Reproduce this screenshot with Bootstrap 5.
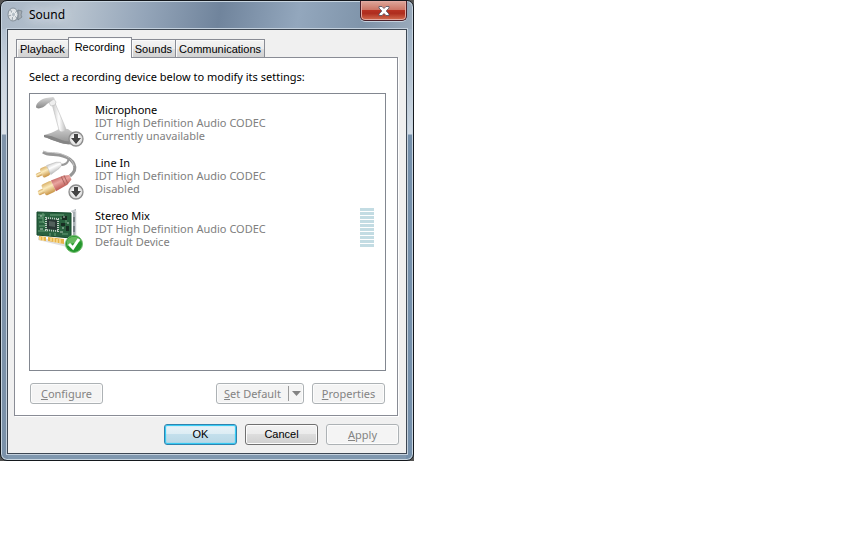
<!DOCTYPE html>
<html lang="en">
<head>
<meta charset="utf-8">
<meta name="viewport" content="width=device-width, initial-scale=1">
<title>Sound</title>
<link rel="stylesheet" href="https://cdn.jsdelivr.net/npm/bootstrap@5.3.0/dist/css/bootstrap.min.css">
<style>
body { font-family: "Noto Sans", "Open Sans", sans-serif; font-size: 11px; line-height: 13px; color: #000; background: #fff; }
.desk { max-width: 414px; background: #555554; }
.win { border: 1px solid #14181d; border-radius: 7px; padding: 0 5px 5px;
  box-shadow: inset 0 0 0 1px #c8d5e0;
  background:
    linear-gradient(#b2c0cf, #ccd5df 50px, #dce2e9 105px, #8094aa 106px, #7a91a9 100%) 0 28px / 7px 100% no-repeat,
    linear-gradient(#9db0c3, #b4c3d2 50px, #d2dce6 105px, #7590ab 106px, #7590ab 100%) 100% 28px / 7px 100% no-repeat,
    linear-gradient(100deg, #a9b7c6 0, #b7c3cf 18%, #94a5b9 35%, #70849c 53%, #93a7bd 72%, #7f94aa 88%, #9aaabb 100%) 0 0 / 100% 28px no-repeat,
    #8098af; }
.title-bar { height: 27px; padding: 0 1px; }
.title-icon { margin-top: 6px; }
.title-text { font-size: 12px; line-height: 18px; padding: 5px 0 0 6px; font-weight: 400; text-shadow: 0 0 8px #e4eaf0, 0 0 12px #e4eaf0; }
.close-btn { width: 47px; height: 20px; padding: 0; border: 1px solid #4b2029; border-top: 0; border-radius: 0 0 5px 5px; box-shadow: inset 0 0 0 1px #e3aaa2, 0 1px 0 #c5d0dc; background: linear-gradient(#dda79b, #cd7767 45%, #b73222 50%, #ae2d1e 65%, #d36d50); display: flex; align-items: center; justify-content: center; }
.client { border: 1px solid #3d4753; outline: 1px solid #c3d0dd; margin: 1px; background: #f0f0f0; padding: 7px 7px 8px 6px; }
.nav-tabs.tab-strip { border: 0; padding-left: 2px; height: 21px; align-items: flex-end; flex-wrap: nowrap; position: relative; z-index: 1; }
.tab-strip .nav-link { border: 1px solid #898c95; border-left-width: 0; border-bottom: 0; border-radius: 0; padding: 0 3px 1px; height: 18px; line-height: 18px; color: #000; white-space: nowrap; background: linear-gradient(#f3f3f3, #ececec 50%, #dedede 51%, #d2d2d2); margin: 0 0 1px; box-shadow: inset 1px 1px 0 #fafafa; }
.tab-strip .nav-item:first-child .nav-link { border-left-width: 1px; }
.tab-strip .nav-link.active { height: 21px; margin: 0 0 0 -1px; border: 1px solid #898c95; border-bottom: 0; background: #fff; color: #000; padding: 0 6px 2px; line-height: 18px; }
.tight { font-family: "Liberation Sans", Arial, sans-serif; }
.page-pane { background: #fff; border: 1px solid #898c95; margin: -1px 1px 0 0; padding: 12px 11px 11px 14px; box-shadow: 1px 1px 0 #fff; }
.hint { margin: 0 0 10px; }
.device-box { border: 1px solid #828790; height: 278px; padding: 3px 11px 0 5px; margin-bottom: 12px; overflow: auto; }
.device-box .list-group-item { border: 0; padding: 0; height: 53px; background: transparent; color: #808080; }
.device-icon { width: 50px; height: 50px; flex: none; }
.device-name { color: #000; }
.device-text { padding: 6px 0 0 10px; }
.meter { width: 14px; margin-top: 5px; gap: 1px; }
.meter i { height: 3px; background: #c3dce3; }
.pane-buttons { padding: 0 1px; }
.push { width: 73px; height: 21px; padding: 0; border: 1px solid #707070; border-radius: 3px; font-size: 11px; line-height: 19px; color: #000; box-shadow: inset 0 0 0 1px #fcfcfc; background: linear-gradient(#f2f2f2, #ebebeb 49%, #dddddd 50%, #cfcfcf); }
.push:hover { border-color: #3c7fb1; color: #000; }
.push:disabled { opacity: 1; color: #838383; border-color: #adb2b5; background: #f4f4f4; }
.push-main { border-color: #3083ae; box-shadow: inset 0 0 1px 1px #27c8f4; background: linear-gradient(#eaf3f8, #dcecf4 49%, #c3dfec 50%, #b9d7e5); }
.push-wide { width: 88px; }
.arrow-part { width: 15px; height: 15px; border-left: 1px solid #9a9a9a; display: flex; align-items: center; justify-content: center; }
</style>
<script defer src="https://cdn.jsdelivr.net/npm/bootstrap@5.3.0/dist/js/bootstrap.bundle.min.js"></script>
</head>
<body>
<main class="desk">
<section class="win" aria-labelledby="win-title">
  <header class="title-bar d-flex align-items-start">
    <svg class="flex-shrink-0 title-icon" width="16" height="16" viewBox="0 0 16 16" aria-hidden="true">
      <path d="M8 3l5 1 1 3-1 4-5 3z" fill="#8b949c"/><path d="M11 3l4 1-1 4 1 2-4 3z" fill="#a5adb4" stroke="#697580" stroke-width=".6"/>
      <ellipse cx="6" cy="7.500" rx="5" ry="6.500" fill="#dfe3e6" stroke="#84909a"/>
      <path d="M6 7.500L3 2M6 7.500L1.500 9M6 7.500L5 14M6 7.500L10 4M6 7.500L10 11" stroke="#98a3ab"/>
      <ellipse cx="6.500" cy="7.500" rx="2" ry="2.500" fill="#b3bdc4" stroke="#fff" stroke-width=".7"/>
    </svg>
    <h1 class="title-text m-0 me-auto" id="win-title">Sound</h1>
    <button type="button" class="close-btn" aria-label="Close">
      <svg width="12" height="10" viewBox="0 0 12 10" aria-hidden="true"><path d="M1 .5h3l2 2 2-2h3v1.500L8.200 5 11 8v1.500H8l-2-2-2 2H1V8l2.800-3L1 2z" fill="#fff" stroke="#4e4f60" stroke-width=".8"/></svg>
    </button>
  </header>
  <div class="client">
    <ul class="nav nav-tabs tab-strip tight" role="tablist">
      <li class="nav-item" role="presentation"><button class="nav-link" type="button" role="tab">Playback</button></li>
      <li class="nav-item" role="presentation"><button class="nav-link active" type="button" role="tab" aria-selected="true">Recording</button></li>
      <li class="nav-item" role="presentation"><button class="nav-link" type="button" role="tab">Sounds</button></li>
      <li class="nav-item" role="presentation"><button class="nav-link" type="button" role="tab">Communications</button></li>
    </ul>
    <div class="page-pane">
      <p class="hint">Select a recording device below to modify its settings:</p>
      <div class="device-box">
        <ul class="list-group list-group-flush">
          <li class="list-group-item d-flex">
            <svg class="device-icon" viewBox="0 0 50 50" aria-hidden="true">
              <defs>
                <linearGradient id="silver"><stop stop-color="#c4c4c4"/><stop offset=".5" stop-color="#fff"/><stop offset="1" stop-color="#bdbdbd"/></linearGradient>
                <linearGradient id="stand" x2="0" y2="1"><stop stop-color="#c8c8c8"/><stop offset="1" stop-color="#8e8e8e"/></linearGradient>
                <linearGradient id="head" x2="0" y2="1"><stop stop-color="#d8d8d8"/><stop offset="1" stop-color="#888"/></linearGradient>
                <radialGradient id="disc"><stop offset=".4" stop-color="#fff"/><stop offset="1" stop-color="#cfcfcf"/></radialGradient>
              </defs>
              <path d="M9 38c5-1 10-3 15-6l9 0c3 3 8 5 13 6v8c-9 1-14 2-20 0-7-2-13-5-17-6z" fill="url(#stand)"/>
              <path d="M9 38c7 0 14 4 21 6 5 1 10 0 15-1v4c-8 0-12 1-19-1-7-2-13-5-17-6z" fill="#858585"/>
              <path d="M17 7l3-1 11 26c0 3-6 4-7 1z" fill="url(#silver)" stroke="#bdbdbd" stroke-width=".6"/>
              <path d="M15 3l4-1 2 3-1 3-4 1-2-3z" fill="#eee" stroke="#bbb" stroke-width=".6"/>
              <path d="M1 10c0-4 5-8 10-9l7-1c2 1 2 2 0 3l-6 4c-3 4-10 6-11 3z" fill="url(#head)"/>
              <circle cx="41" cy="42" r="7" fill="url(#disc)" stroke="#8d8d8d" stroke-width="1.300"/><path d="M39 37h4v4h3l-5 6-5-6h3z" fill="#444"/>
            </svg>
            <div class="device-text"><div class="device-name">Microphone</div><div>IDT High Definition Audio CODEC</div><div>Currently unavailable</div></div>
          </li>
          <li class="list-group-item d-flex">
            <svg class="device-icon" viewBox="0 0 50 50" aria-hidden="true">
              <defs>
                <linearGradient id="gold" x2="0" y2="1"><stop stop-color="#d9b16a"/><stop offset=".4" stop-color="#fbebbd"/><stop offset="1" stop-color="#c89345"/></linearGradient>
                <linearGradient id="red" x2="0" y2="1"><stop stop-color="#c96d69"/><stop offset=".4" stop-color="#e9a5a0"/><stop offset="1" stop-color="#bd5752"/></linearGradient>
                <linearGradient id="white" x2="0" y2="1"><stop stop-color="#d0d0d0"/><stop offset=".4" stop-color="#fff"/><stop offset="1" stop-color="#b9b9b9"/></linearGradient>
              </defs>
              <path d="M8 2c5 4 13 1 20 4 10 3 17 12 7 20" fill="none" stroke="#969696" stroke-width="3"/>
              <path d="M8 1c6 3 13 0 21 4 5 2 9 6 10 11" fill="none" stroke="#c3c3c3"/>
              <path d="M25 15c7 0 8-3 9-7" fill="none" stroke="#999" stroke-width="2"/>
              <g transform="translate(1 26) rotate(-25)">
                <rect y="-2" width="8" height="4" rx="2" fill="url(#gold)"/><rect x="6" y="-5" width="8" height="10" rx="2" fill="url(#gold)"/><path d="M14-5l10 1 4 2v3l-4 2-10 2z" fill="url(#white)" stroke="#b4b4b4" stroke-width=".5"/>
              </g>
              <g transform="translate(3 43) rotate(-25)">
                <rect y="-2" width="9" height="5" rx="2" fill="url(#gold)"/><rect x="6" y="-6" width="11" height="12" rx="2" fill="url(#gold)"/><path d="M17-6l13 1 6 2v5l-6 3-13 1z" fill="url(#red)"/><path d="M28-5v9M31-5v9" stroke="#aa6662"/>
              </g>
              <circle cx="41" cy="42" r="7" fill="url(#disc)" stroke="#8d8d8d" stroke-width="1.300"/><path d="M39 37h4v4h3l-5 6-5-6h3z" fill="#444"/>
            </svg>
            <div class="device-text"><div class="device-name">Line In</div><div>IDT High Definition Audio CODEC</div><div>Disabled</div></div>
          </li>
          <li class="list-group-item d-flex">
            <svg class="device-icon" viewBox="0 0 50 50" aria-hidden="true">
              <path d="M3 34l29 6v4L3 37z" fill="#e0e0e0"/>
              <path d="M36 8l5-2v35l-3 1V10z" fill="#a6adb2"/><path d="M36 8h5v32" fill="none" stroke="#e5e8ea"/><path d="M38 14h2v5h-2zM38 23h2v6h-2z" fill="#747e83"/>
              <path d="M2 9l34 1v25L2 32z" fill="#29613f" stroke="#174a2d"/>
              <path d="M3 12h7M3 15h5M15 12h14M4 19h5M4 23h6M3 28h10M25 15l6 1v4M27 31h6M15 30v3M20 30v3M8 10v9l4 3" stroke="#68a078" fill="none"/>
              <path d="M11 15l12 1v12l-12-1z" fill="none" stroke="#c0cbc4" stroke-width="2" stroke-dasharray="1 1"/><path d="M12 16l10 1v10l-10-1z" fill="#293735"/><path d="M14 18l6 1v5l-6-1z" fill="#52605c"/>
              <path d="M27 13h5v4h-5zM26 20h4v3h-4zM31 23h3v5h-3z" fill="#182c22"/><path d="M28 14h2M27 25h2M5 26h3M5 13h2M32 20h2M25 29h3" stroke="#b9cebe"/>
              <path d="M4 33l7 1v4l-7-1zM13 34l16 2v5l-16-3z" fill="#e9b347"/><path d="M5 34v3M8 34v4M16 35v3M19 35v4M22 36v4M25 36v4" stroke="#fff0bc"/>
              <circle cx="39" cy="41" r="8.500" fill="#24962d" stroke="#74be70"/><path d="M32 38a8 8 0 0 1 14 0c-5 3-9 1-14 5z" fill="#65ba5e"/><path d="M34 41l4 4 6-9" fill="none" stroke="#fff" stroke-width="3"/>
            </svg>
            <div class="device-text me-auto"><div class="device-name">Stereo Mix</div><div>IDT High Definition Audio CODEC</div><div>Default Device</div></div>
            <div class="meter d-flex flex-column" role="meter" aria-label="Level" aria-valuenow="0" aria-valuemin="0" aria-valuemax="10"><i></i><i></i><i></i><i></i><i></i><i></i><i></i><i></i><i></i><i></i></div>
          </li>
        </ul>
      </div>
      <div class="pane-buttons d-flex gap-2">
        <button type="button" class="btn push me-auto" disabled><u>C</u>onfigure</button>
        <button type="button" class="btn push push-wide d-flex align-items-center justify-content-between" disabled><span class="flex-grow-1"><u>S</u>et Default</span><span class="arrow-part"><svg width="9" height="5" viewBox="0 0 9 5" aria-hidden="true"><path d="M0 0h9L4.500 5z" fill="#838383"/></svg></span></button>
        <button type="button" class="btn push" disabled><u>P</u>roperties</button>
      </div>
    </div>
    <footer class="d-flex justify-content-end gap-2 pt-2">
      <button type="button" class="btn push push-main tight">OK</button>
      <button type="button" class="btn push tight">Cancel</button>
      <button type="button" class="btn push" disabled><u>A</u>pply</button>
    </footer>
  </div>
</section>
</main>
</body>
</html>
